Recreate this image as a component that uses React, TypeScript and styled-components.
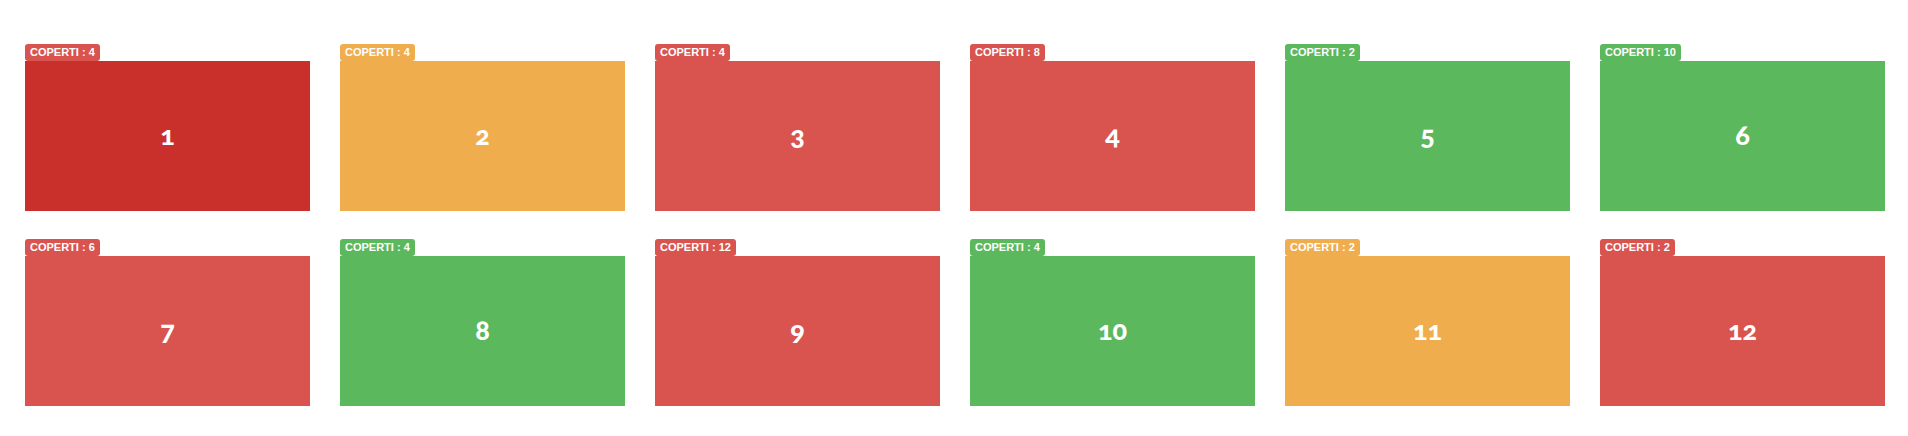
import React from "react";
import styled, { createGlobalStyle } from "styled-components";

type Status = "selected" | "busy" | "reserved" | "free";

interface DiningTable {
  number: number;
  seats: number;
  status: Status;
}

const tileColors: Record<Status, string> = {
  selected: "#c9302c",
  busy: "#d9534f",
  reserved: "#f0ad4e",
  free: "#5cb85c",
};

const labelColors: Record<Status, string> = {
  ...tileColors,
  selected: "#d9534f",
};

const tables: DiningTable[] = [
  { number: 1, seats: 4, status: "selected" },
  { number: 2, seats: 4, status: "reserved" },
  { number: 3, seats: 4, status: "busy" },
  { number: 4, seats: 8, status: "busy" },
  { number: 5, seats: 2, status: "free" },
  { number: 6, seats: 10, status: "free" },
  { number: 7, seats: 6, status: "busy" },
  { number: 8, seats: 4, status: "free" },
  { number: 9, seats: 12, status: "busy" },
  { number: 10, seats: 4, status: "free" },
  { number: 11, seats: 2, status: "reserved" },
  { number: 12, seats: 2, status: "busy" },
];

const GlobalStyle = createGlobalStyle`
  *, *::before, *::after { box-sizing: border-box; }
  body { margin: 0; background: #fff; }
`;

const Room = styled.main`
  display: grid;
  grid-template-columns: repeat(6, minmax(0, 1fr));
  gap: 28px 30px;
  padding: 44px 23px 25px 25px;
`;

const TableCard = styled.article`
  display: flex;
  flex-direction: column;
  align-items: flex-start;
`;

const SeatsLabel = styled.span<{ $status: Status }>`
  padding: 0 5px;
  border-radius: 3px;
  background: ${({ $status }) => labelColors[$status]};
  color: #fff;
  font: bold 11px/17px "Liberation Sans", Arial, sans-serif;
  white-space: nowrap;
`;

const TableTile = styled.button<{ $status: Status }>`
  width: 100%;
  height: 150px;
  padding: 0 0 2px;
  border: 0;
  background: ${({ $status }) => tileColors[$status]};
  color: #fff;
  font-family: Lato, sans-serif;
  font-size: 27px;
  font-weight: 900;
  line-height: 28px;
  font-variant-numeric: oldstyle-nums;
  cursor: pointer;
`;

export default function App() {
  return (
    <>
      <GlobalStyle />
      <Room>
        {tables.map(({ number, seats, status }) => (
          <TableCard key={number}>
            <SeatsLabel $status={status} id={`seats-${number}`}>
              COPERTI : {seats}
            </SeatsLabel>
            <TableTile
              type="button"
              $status={status}
              aria-describedby={`seats-${number}`}
            >
              {number}
            </TableTile>
          </TableCard>
        ))}
      </Room>
    </>
  );
}
